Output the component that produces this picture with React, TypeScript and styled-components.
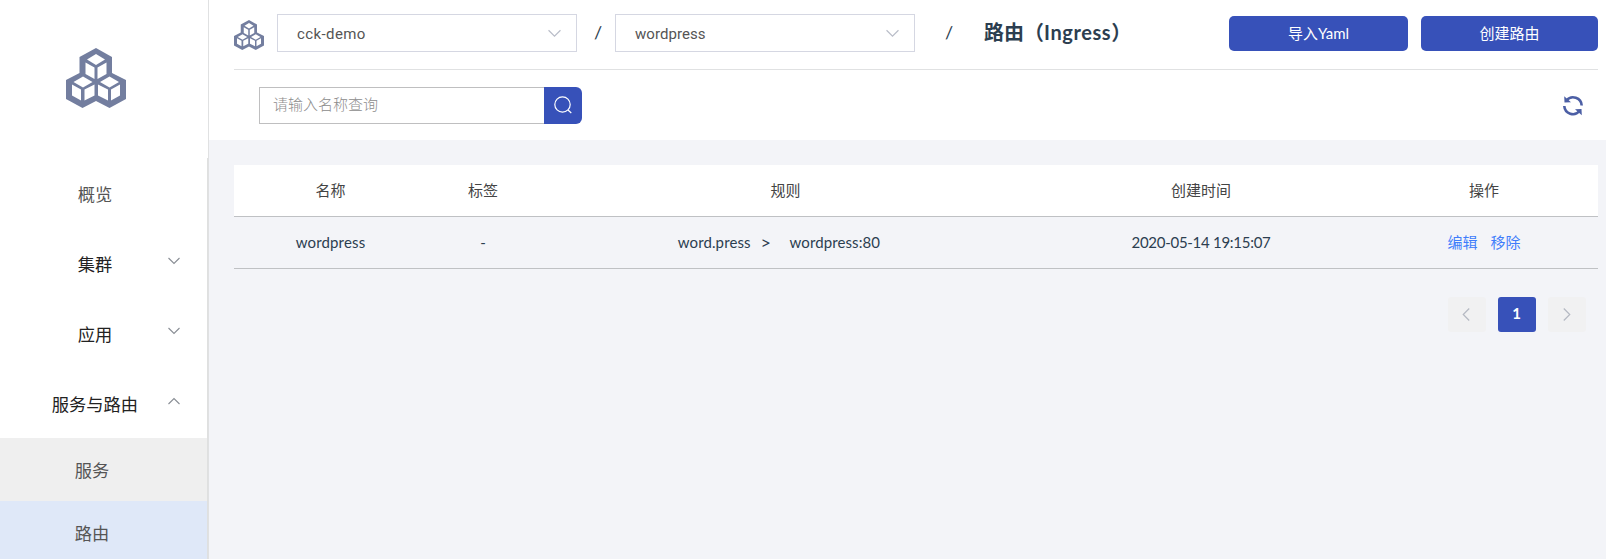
import React from 'react';
import styled, { createGlobalStyle } from 'styled-components';

const Global = createGlobalStyle`
  * { box-sizing: border-box; }
  body { margin: 0; overflow: hidden; background: #f3f4f8; }
  #root { font-family: Lato, "Noto Sans CJK SC", sans-serif; color: #2c3e50; font-size: 15px; }
`;

const Page = styled.div`display: flex; height: 559px;`;
const Sidebar = styled.aside`
  width: 209px; flex: none; background: #fff; border-right: 1px solid #e0e1e2;
  display: flex; flex-direction: column; overflow: hidden;
`;
const Brand = styled.div`height: 158px; flex: none; padding: 48px 0 0 66px;`;
const Menu = styled.nav`flex: 1; border-right: 1px solid #dfe0e0;`;
const MenuItem = styled.div<{ $muted?: boolean }>`
  height: 70px; display: grid; grid-template-columns: 190px 1fr; align-items: center;
  font-size: 17.25px; color: ${p => (p.$muted ? '#555' : '#222')};
  padding-top: 3px;
`;
const MenuLabel = styled.span`text-align: center; line-height: 24px;`;
const MenuArrow = styled.span`display: flex; margin: -7px 0 0 -22px;`;
const SubItem = styled.div<{ $active?: boolean }>`
  height: 63px; padding: 0 23px 0 0; display: flex; align-items: center; justify-content: center;
  font-size: 17.25px; color: #555; background: ${p => (p.$active ? '#dfe8f8' : '#efefef')};
`;
const Main = styled.main`flex: 1; min-width: 0;`;
const Top = styled.header`background: #fff; height: 140px; padding: 0 8px 0 25px;`;
const Crumbs = styled.div`
  height: 70px; border-bottom: 1px solid #e0e1e2; display: flex; align-items: flex-start; padding-top: 14px;
`;
const LogoSlot = styled.div`width: 43px; padding-top: 6px; height: 36px;`;
const Select = styled.div`
  width: 300px; height: 38px; border: 1px solid #d5d7e2; display: flex; align-items: center;
  justify-content: space-between; padding: 0 15px 0 19px; color: #555;
`;
const SelectText = styled.span<{ $ls: number }>`
  font-family: Roboto, "Noto Sans CJK SC", sans-serif; letter-spacing: ${p => p.$ls}px; padding-top: 1px;
`;
const Slash = styled.span<{ $w: number; $pad: number }>`
  width: ${p => p.$w}px; padding-left: ${p => p.$pad}px; font-size: 18px; line-height: 37px;
`;
const Title = styled.h1`
  margin: 0; font-size: 20px; font-weight: 700; line-height: 37px; white-space: nowrap;
  span { letter-spacing: 0.6px; }
`;
const Actions = styled.div`margin-left: auto; display: flex; gap: 13px; padding-top: 2px;`;
const Button = styled.button<{ $w: number }>`
  width: ${p => p.$w}px; height: 35px; padding: 0 0 3px; border: 0; border-radius: 5px;
  background: #3751b9; color: #fff; font: inherit;
`;
const Tools = styled.div`display: flex; justify-content: space-between; padding: 17px 14px 0 25px;`;
const Search = styled.div`display: flex; height: 37px;`;
const Field = styled.input`
  width: 285px; border: 1px solid #bfbfc0; border-right: 0; padding: 0 0 4px 13px; outline: 0;
  font: inherit; font-size: 15px; background: #fff;
  &::placeholder { color: #8c8c8c; font-weight: 300; opacity: 1; }
`;
const SearchButton = styled.button`
  width: 38px; border: 0; border-radius: 0 6px 6px 0; background: #3751b9; padding: 0 1px 2px 0;
  display: flex; align-items: center; justify-content: center;
`;
const Refresh = styled.span`display: flex; padding-top: 8px;`;
const Content = styled.section`padding: 25px 8px 0 25px;`;
const Row = styled.div<{ $head?: boolean }>`
  display: grid; grid-template-columns: 193px 112px 493px 338px 228px; height: 52px;
  border-bottom: 1px solid #bfc1c4; background: ${p => (p.$head ? '#fff' : 'transparent')};
  color: ${p => (p.$head ? '#444' : '#2c3e50')};
`;
const Cell = styled.div<{ $ls?: number; $shift?: number }>`
  display: flex; align-items: center; justify-content: center; white-space: pre;
  padding: 0 ${p => p.$shift || 0}px 2px 0; letter-spacing: ${p => p.$ls || 0}px;
`;
const Arrow = styled.span`width: 39px; padding-left: 10px; font-size: 18px; line-height: 18px;`;
const Link = styled.a`color: #3f7dfb; & + & { margin-left: 13px; }`;
const Pager = styled.div`display: flex; justify-content: flex-end; gap: 12px; padding: 28px 12px 0 0;`;
const PageButton = styled.span<{ $active?: boolean }>`
  width: 38px; height: 35px; border-radius: 3px; display: flex; align-items: center; justify-content: center;
  padding: 0 1px ${p => (p.$active ? 3 : 0)}px 0;
  font-weight: 700; color: #fff; background: ${p => (p.$active ? '#3751b9' : '#f1f1f2')};
`;

const Cubes = ({ size }: { size: number }) => (
  <svg width={size} height={size} viewBox="0 0 60 60">
    <path fill="#737e9f" d="M30 0L46 9V25L60 32V51L43.5 60L30 53L16.5 60L0 51V32L13.5 25V9Z" />
    <g fill="#fff">
      <path d="M30 6L39 11.5L30 17L21 11.5ZM19.5 14.5L28.5 19.5V31L19.5 26ZM31.5 19.5L40.500 14.5V26L31.5 31Z" />
      <path d="M17 28.5L26.500 34L17 39.500L7.500 34ZM6 36.500L15 41.500V52.500L6 47.500ZM18.500 41.500L28.500 36.500V47.500L18.500 52.500Z" />
      <path d="M43.500 28.500L53 34L43.500 39.500L34 34ZM32 36.500L42 41.500V52.500L32 47.500ZM45 41.500L54 36.500V47.500L45 52.500Z" />
    </g>
  </svg>
);

const Chevron = ({ dir, color, size = 12 }: { dir: 'up' | 'down' | 'left' | 'right'; color: string; size?: number }) => {
  const d = { down: 'M.5 3L6 8.500L11.500 3', up: 'M.5 9L6 3.500L11.500 9', left: 'M8.500 .5L3 6L8.500 11.500', right: 'M3.500 .5L9 6L3.500 11.500' }[dir];
  return (
    <svg width={size} height={size} viewBox="0 0 12 12" fill="none" stroke={color} strokeWidth="1.1">
      <path d={d} />
    </svg>
  );
};

export default function App() {
  return (
    <Page>
      <Global />
      <Sidebar>
        <Brand><Cubes size={60} /></Brand>
        <Menu>
          <MenuItem $muted><MenuLabel>概览</MenuLabel></MenuItem>
          <MenuItem><MenuLabel>集群</MenuLabel><MenuArrow><Chevron dir="down" color="#888d94" /></MenuArrow></MenuItem>
          <MenuItem><MenuLabel>应用</MenuLabel><MenuArrow><Chevron dir="down" color="#888d94" /></MenuArrow></MenuItem>
          <MenuItem><MenuLabel>服务与路由</MenuLabel><MenuArrow><Chevron dir="up" color="#888d94" /></MenuArrow></MenuItem>
          <SubItem>服务</SubItem>
          <SubItem $active>路由</SubItem>
        </Menu>
      </Sidebar>
      <Main>
        <Top>
          <Crumbs>
            <LogoSlot><Cubes size={30} /></LogoSlot>
            <Select><SelectText $ls={0.4}>cck-demo</SelectText><Chevron dir="down" color="#b9bdc8" size={13} /></Select>
            <Slash $w={38} $pad={17}>/</Slash>
            <Select><SelectText $ls={0.05}>wordpress</SelectText><Chevron dir="down" color="#b9bdc8" size={13} /></Select>
            <Slash $w={69} $pad={30}>/</Slash>
            <Title>路由（<span>Ingress</span>）</Title>
            <Actions>
              <Button $w={179}>导入Yaml</Button>
              <Button $w={177}>创建路由</Button>
            </Actions>
          </Crumbs>
          <Tools>
            <Search>
              <Field placeholder="请输入名称查询" />
              <SearchButton>
                <svg width="18" height="18" viewBox="0 0 18 18" fill="none" stroke="#fff" strokeWidth="1.200">
                  <circle cx="8.500" cy="8.500" r="7.700" /><path d="M14 14L17.300 17" />
                </svg>
              </SearchButton>
            </Search>
            <Refresh>
              <svg width="22" height="22" viewBox="0 0 22 22" fill="none" stroke="#4c5fa5" strokeWidth="2.600">
                <path d="M4.500 5.500A8.600 8.600 0 0 1 19.700 10.500M17.500 16A8.600 8.600 0 0 1 2.300 11" />
                <path fill="#4c5fa5" stroke="none" d="M2.200 1.200L2.500 7.500L9 7.200ZM19.800 20.300L19.500 14L13 14.300Z" />
              </svg>
            </Refresh>
          </Tools>
        </Top>
        <Content>
          <Row $head>
            <Cell>名称</Cell><Cell>标签</Cell><Cell>规则</Cell><Cell>创建时间</Cell><Cell>操作</Cell>
          </Row>
          <Row>
            <Cell $ls={0.15}>wordpress</Cell>
            <Cell>-</Cell>
            <Cell $ls={0.1} $shift={13}><span>word.press</span><Arrow>&gt;</Arrow><span>wordpress:80</span></Cell>
            <Cell $ls={-0.28}>2020-05-14 19:15:07</Cell>
            <Cell><Link>编辑</Link><Link>移除</Link></Cell>
          </Row>
          <Pager>
            <PageButton><Chevron dir="left" color="#b4b8c2" size={13} /></PageButton>
            <PageButton $active>1</PageButton>
            <PageButton><Chevron dir="right" color="#b4b8c2" size={13} /></PageButton>
          </Pager>
        </Content>
      </Main>
    </Page>
  );
}
